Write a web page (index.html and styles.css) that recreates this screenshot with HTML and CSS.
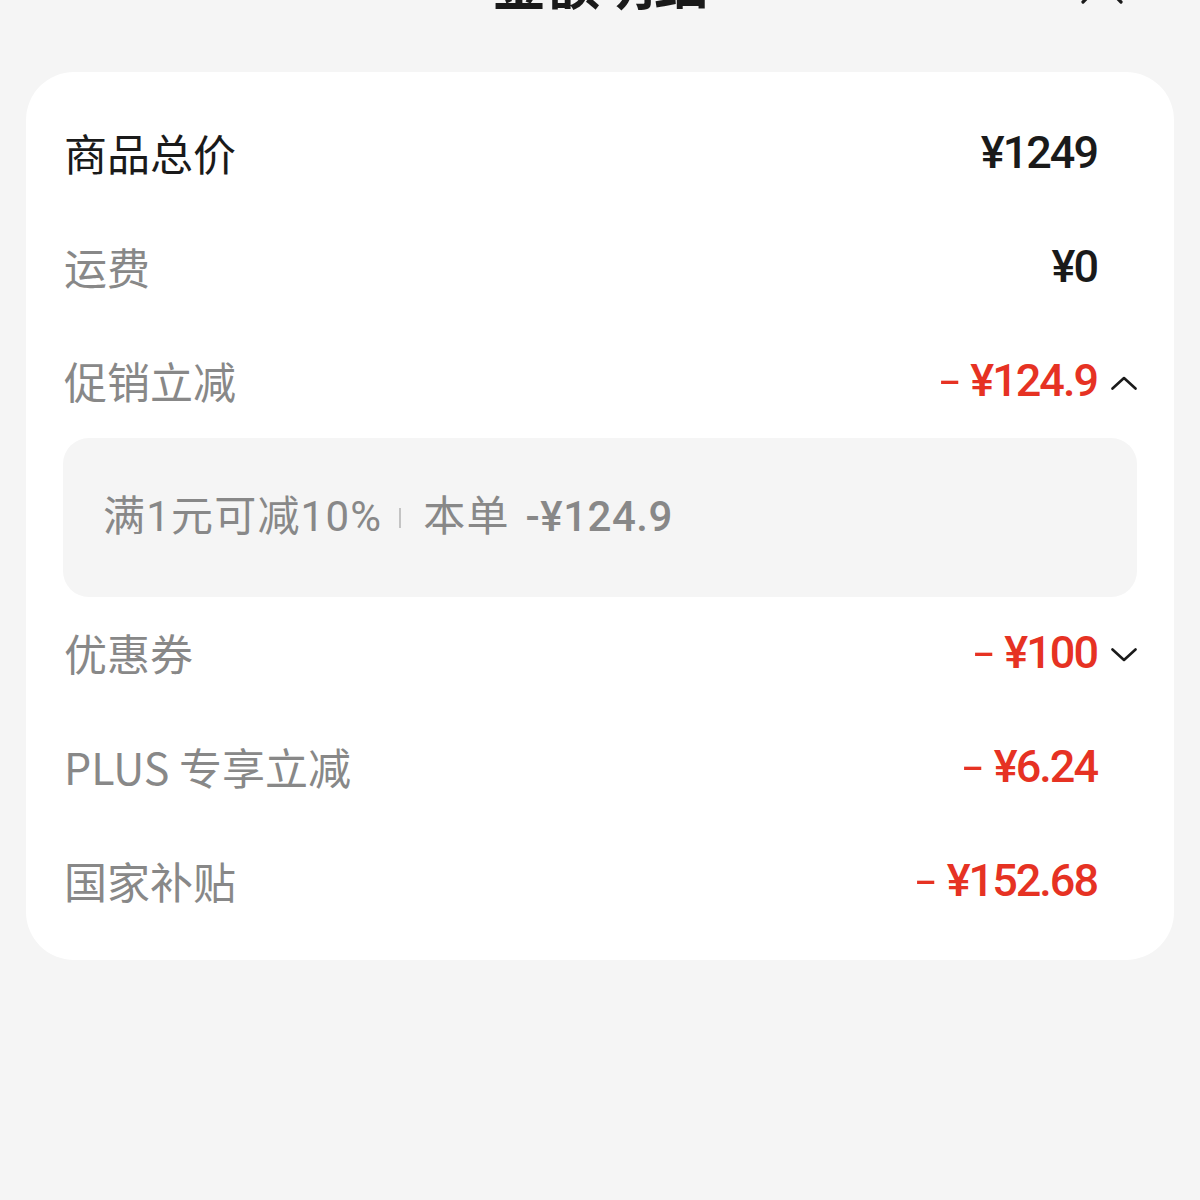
FILE: index.html
```html
<!DOCTYPE html>
<html lang="zh-CN">
<head>
<meta charset="utf-8">
<title>金额明细</title>
<link rel="stylesheet" href="styles.css">
</head>
<body>
<div class="sheet">
  <header class="header">
    <h1 class="title">金额明细</h1>
    <svg class="close" width="44" height="44" viewBox="0 0 44 44"><path d="M3 3 L41 41 M41 3 L3 41" stroke="#1a1a1a" stroke-width="3.2" stroke-linecap="round" fill="none"/></svg>
  </header>
  <section class="card">
    <div class="row">
      <span class="label strong">商品总价</span>
      <span class="value">¥1249</span>
      <span class="icon-slot"></span>
    </div>
    <div class="row">
      <span class="label">运费</span>
      <span class="value">¥0</span>
      <span class="icon-slot"></span>
    </div>
    <div class="row">
      <span class="label">促销立减</span>
      <span class="value red"><span class="minus">-</span>¥124.9</span>
      <span class="icon-slot">
        <svg width="26" height="14" viewBox="0 0 26 14"><path d="M1.5 12.5 L13 2 L24.5 12.5" stroke="#1a1a1a" stroke-width="2.6" fill="none" stroke-linecap="round" stroke-linejoin="round"/></svg>
      </span>
    </div>
    <div class="detail">
      <span class="detail-text">满1元可减10%</span>
      <span class="divider"></span>
      <span class="detail-text">本单<span class="num">-¥124.9</span></span>
    </div>
    <div class="row">
      <span class="label">优惠券</span>
      <span class="value red"><span class="minus">-</span>¥100</span>
      <span class="icon-slot">
        <svg width="26" height="14" viewBox="0 0 26 14"><path d="M1.5 1.5 L13 12 L24.5 1.5" stroke="#1a1a1a" stroke-width="2.6" fill="none" stroke-linecap="round" stroke-linejoin="round"/></svg>
      </span>
    </div>
    <div class="row">
      <span class="label">PLUS 专享立减</span>
      <span class="value red"><span class="minus">-</span>¥6.24</span>
      <span class="icon-slot"></span>
    </div>
    <div class="row">
      <span class="label">国家补贴</span>
      <span class="value red"><span class="minus">-</span>¥152.68</span>
      <span class="icon-slot"></span>
    </div>
  </section>
</div>
</body>
</html>
```
FILE: styles.css
```css
html, body {
  margin: 0;
  padding: 0;
  background: #f5f5f5;
}
body {
  width: 1200px;
  height: 1200px;
  overflow: hidden;
  font-family: "Noto Sans CJK SC", "Noto Sans", sans-serif;
}
.header {
  position: relative;
  height: 72px;
  display: flex;
  justify-content: center;
}
.title {
  margin: -45px 0 0 0;
  font-size: 54px;
  line-height: 54px;
  font-weight: 700;
  color: #1a1a1a;
  height: 54px;
}
.close {
  position: absolute;
  left: 1080px;
  top: -39px;
}
.card {
  margin: 0 26px;
  background: #ffffff;
  border-radius: 48px;
  padding: 26px 37px 20px 37px;
  height: 888px;
  box-sizing: border-box;
}
.row {
  height: 114px;
  display: flex;
  align-items: center;
}
.label {
  flex: 1;
  padding-left: 1px;
  padding-bottom: 6px;
  font-size: 43px;
  color: #888888;
  line-height: 1;
}
.label.strong {
  color: #1a1a1a;
}
.value {
  font-family: "Roboto", "Noto Sans", sans-serif;
  font-weight: 500;
  font-size: 45px;
  letter-spacing: -2px;
  color: #1a1a1a;
  line-height: 1;
  padding-bottom: 5px;
}
.value.red {
  color: #e63223;
}
.minus {
  font-weight: 400;
  margin-right: 17px;
  display: inline-block;
  transform: scaleX(1.6);
}
.icon-slot {
  width: 40px;
  display: flex;
  justify-content: flex-end;
  align-items: center;
}
.detail {
  height: 159px;
  margin: -2px 0 1px 0;
  background: #f5f5f5;
  border-radius: 26px;
  display: flex;
  align-items: center;
  padding-left: 40px;
  color: #888888;
  font-size: 42px;
}
.detail-text {
  font-family: "Roboto", "Noto Sans CJK SC", sans-serif;
  letter-spacing: 1.2px;
  line-height: 1;
  padding-bottom: 2px;
}
.detail-text .num {
  font-weight: 500;
  letter-spacing: 0.5px;
  margin-left: 16px;
}
.divider {
  width: 2px;
  height: 20px;
  background: #c4c4c4;
  margin: 0 22px 0 17px;
}
```
